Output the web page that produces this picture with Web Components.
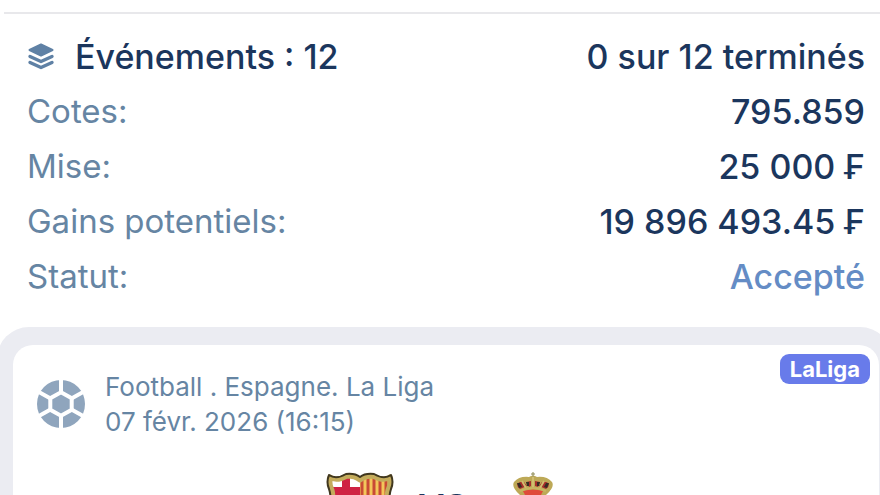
<!DOCTYPE html>
<html lang="fr">
<head>
<meta charset="utf-8">
<meta name="viewport" content="width=device-width">
<title>Coupon</title>
<style>
html,body{margin:0;height:100%;overflow:hidden;background:#fff}
body{font-family:Inter,"Liberation Sans",sans-serif;color:#1b365d}
</style>
</head>
<body>
<bet-slip></bet-slip>
<script>
const define = (name, html) => customElements.define(name, class extends HTMLElement {
  constructor(){ super(); this.attachShadow({mode:'open'}).innerHTML = html; }
});

define('layers-icon', `<style>:host{display:block;width:28px;height:28px}svg{display:block}</style>
<svg width="28" height="28" viewBox="0 0 28 28" fill="#5f81a5" stroke="#5f81a5" stroke-linejoin="round" stroke-linecap="round">
<path d="M14 1.500 25.500 7 14 12.500 2.500 7Z" stroke-width="2"/>
<path d="M3 13.500 14 18.500 25 13.500" fill="none" stroke-width="3.400"/>
<path d="M3 19.500 14 24.500 25 19.500" fill="none" stroke-width="3.400"/></svg>`);

define('ball-icon', `<style>:host{display:block;width:48px;height:48px}svg{display:block}</style>
<svg width="48" height="48" viewBox="0 0 48 48"><circle cx="24" cy="24" r="24" fill="#8fa5bd"/>
<g fill="none" stroke="#fff" stroke-width="4"><path d="M24 12.200 34.700 18.200V29.800L24 35.800 13.300 29.800V18.200Z"/>
<path d="M24 12.500V-1M34.500 18.500 47 11.500M34.500 29.500 47 36.500M24 36V49M13.500 29.500 1 36.500M13.500 18.500 1 11.500"/></g></svg>`);

define('barca-crest', `<style>:host{display:block;width:68px;height:70px}svg{display:block}</style>
<svg width="68" height="70" viewBox="0 0 68 70"><defs><clipPath id="s"><path d="M4 4Q10 9 21 3Q29 3 34 6Q39 3 47 3Q58 9 64 4Q65 12 62 18Q60 26 64 36C66 52 48 61 34 67C20 61 2 52 4 36Q8 26 6 18Q3 12 4 4Z"/></clipPath></defs>
<g clip-path="url(#s)"><path fill="#fff" d="M0 0H34V29H0Z"/><path fill="#cf2343" d="M16 0H24V29H16ZM0 15H34V29H0Z"/>
<path fill="#f3c65a" d="M34 0H68V29H34Z"/><path stroke="#c94a35" stroke-width="3" d="M36 0V29M42 0V29M48 0V29M54 0V29M60 0V29"/>
<path fill="#1c4b91" d="M0 29H68V70H0Z"/><path stroke="#a7223f" stroke-width="8" d="M16 29V70M34 29V70M52 29V70"/></g>
<g fill="none" stroke-linejoin="round">
<path stroke="#c4ac5c" stroke-width="5" d="M4 5Q10 10 21 4Q29 4 34 8Q39 4 47 4Q58 10 64 5Q65 12 62 18Q60 26 63 36C65 51 47 60 34 66C21 60 3 51 5 36Q8 26 6 18Q3 12 4 5Z"/>
<path stroke="#40371f" stroke-width="2" d="M3 3Q10 8 20 2Q29 1 34 5Q39 1 48 2Q58 8 65 3Q68 10 65 17Q62 26 65 36C67 52 49 62 34 68C19 62 1 52 3 36Q6 26 3 17Q0 10 3 3Z"/></g></svg>`);

define('crown-crest', `<style>:host{display:block;width:42px;height:70px}svg{display:block}</style>
<svg width="42" height="70" viewBox="0 0 42 70">
<path fill="#bda957" d="M8 23Q-1 15 2 10Q7 4 17 5Q21 2 25 5Q35 4 40 10Q43 15 34 23Z"/>
<path fill="#a72c2c" d="M5 12Q8 9 12 10L15 14 8 17Q5 15 5 12ZM14 10 19 9V14L17 15ZM23 9 28 10 26 15 23 14ZM30 10Q35 9 37 12Q37 15 34 17L27 14Z"/>
<path fill="#352d24" d="M5 11h3l2 4-3 1ZM14 10h3v4h-2ZM25 10h3l-1 4h-2ZM34 11h3l-2 5-3-1Z"/>
<path fill="none" stroke="#d1bd70" stroke-width="2" d="M10 9 14 16M21 4V15M32 9 28 16"/>
<path stroke="#8b8852" stroke-width="1" d="M21 0V5M19 2H23"/>
<path fill="#df4b3a" d="M11 19Q21 16 31 19L29 23H13Z"/>
<path fill="none" stroke="#c8b562" stroke-width="2" d="M8 19Q21 13 34 19"/>
<circle cx="21" cy="46" r="22" fill="#d4b24c"/><circle cx="21" cy="46" r="18" fill="#fff"/><path stroke="#344c91" stroke-width="6" d="M9 34 33 59"/></svg>`);

define('slip-row', `<style>:host{display:flex;justify-content:space-between;align-items:center;font-size:33px;line-height:55px;white-space:nowrap;color:#6685a3}
.label{display:flex;align-items:center;gap:20px}.value{font-size:34px;font-weight:500;color:#1b365d}
:host([head]) .label{font-size:34px;font-weight:500;color:#1b365d}:host([accepted]) .value{color:#648cc5}</style>
<span class="label"><slot name="icon"></slot><slot name="label"></slot></span><span class="value"><slot></slot></span>`);

define('league-badge', `<style>:host{display:block;padding:0 10px;border-radius:9px;background:#687bea;color:#fff;font-size:22px;line-height:30px;font-weight:700}</style><slot></slot>`);

define('match-card', `<style>
:host{display:block;position:relative;background:#fff;border-radius:20px;padding:24px 24px 0}
.info{display:flex;align-items:center;gap:20px;font-size:26px;line-height:35px;color:#6685a3}
.teams{display:flex;justify-content:center;gap:24px;margin-top:33px;padding-right:12px}
crown-crest{margin-left:20px}
.vs{font-size:36px;line-height:44px;font-weight:600;padding-top:13px;color:#1b365d}
league-badge{position:absolute;top:9px;right:9px}
</style>
<div class="info"><ball-icon></ball-icon><div><div><slot name="league"></slot></div><div><slot name="date"></slot></div></div></div>
<league-badge><slot name="badge"></slot></league-badge>
<div class="teams"><barca-crest></barca-crest><span class="vs">VS</span><crown-crest></crown-crest></div>`);

define('bet-slip', `<style>
:host{display:block;padding-top:12px}
.rule{height:2px;background:#e8e8eb;margin-left:4px}
.summary{padding:15px 15px 23px 27px}
.matches{background:#ebecf2;border-radius:32px;margin:0 -12px 0 -3px;padding:18px 13px 18px 16px}
</style>
<div class="rule"></div>
<div class="summary">
<slip-row head><layers-icon slot="icon"></layers-icon><span slot="label">Événements : 12</span>0 sur 12 terminés</slip-row>
<slip-row><span slot="label">Cotes:</span>795.859</slip-row>
<slip-row><span slot="label">Mise:</span>25 000 ₣</slip-row>
<slip-row><span slot="label">Gains potentiels:</span>19 896 493.45 ₣</slip-row>
<slip-row accepted><span slot="label">Statut:</span>Accepté</slip-row>
</div>
<div class="matches"><match-card><span slot="league">Football . Espagne. La Liga</span><span slot="date">07 févr. 2026 (16:15)</span><span slot="badge">LaLiga</span></match-card></div>`);
</script>
</body>
</html>
